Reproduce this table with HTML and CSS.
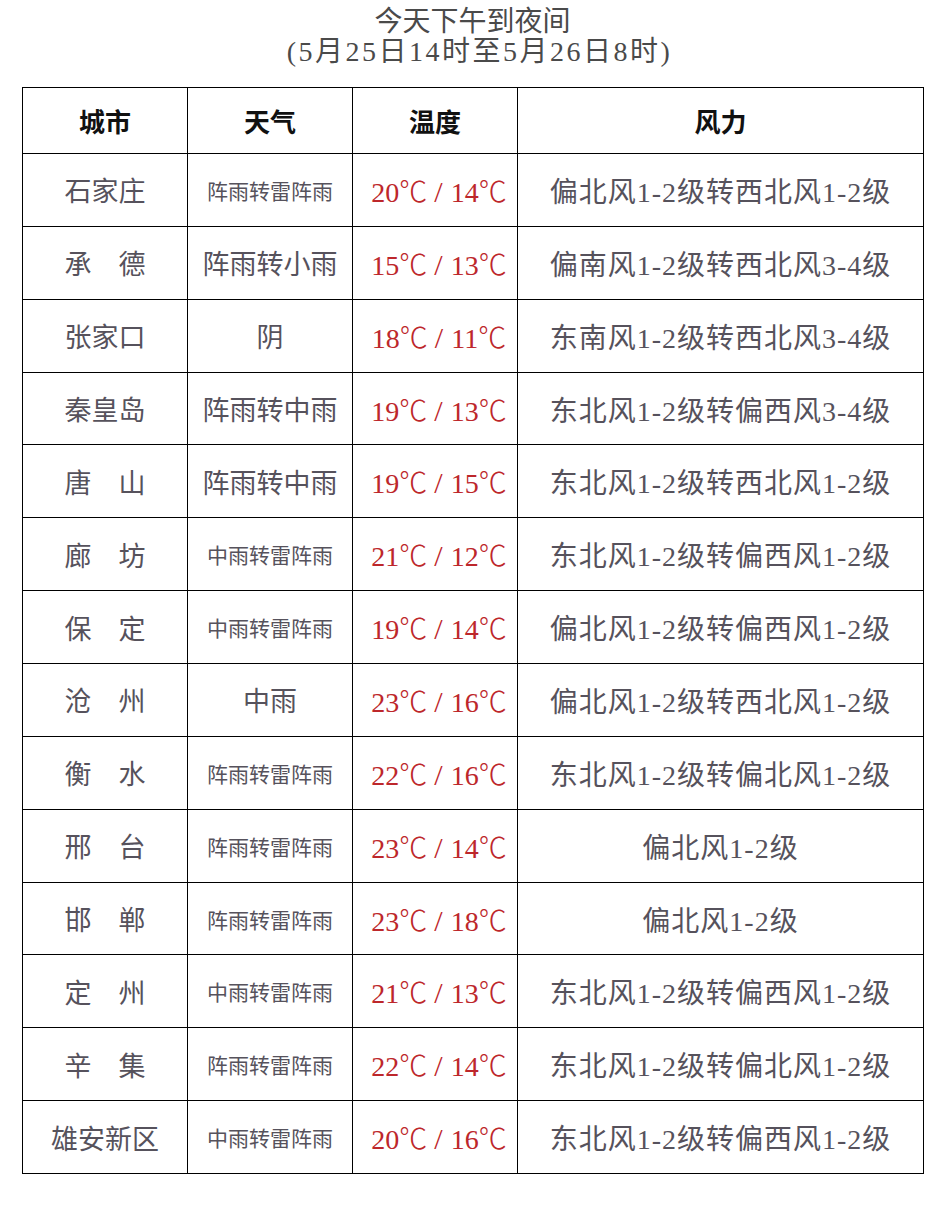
FILE: index.html
```html
<!DOCTYPE html>
<html lang="zh-CN">
<head>
<meta charset="utf-8">
<title>今天下午到夜间</title>
<link rel="stylesheet" href="styles.css">
</head>
<body>
<div class="page">
  <div class="title">
    <div class="title-line">今天下午到夜间</div>
    <div class="title-line sub">(5月25日14时至5月26日8时)</div>
  </div>
  <table class="forecast">
    <colgroup>
      <col class="c-city"><col class="c-wx"><col class="c-temp"><col class="c-wind">
    </colgroup>
    <thead>
      <tr class="head"><th>城市</th><th>天气</th><th>温度</th><th>风力</th></tr>
    </thead>
    <tbody>
      <tr><td class="city">石家庄</td><td class="wx sm">阵雨转雷阵雨</td><td class="temp">20<span class="u">℃</span><span class="sl">/</span>14<span class="u">℃</span></td><td class="wind">偏北风1-2级转西北风1-2级</td></tr>
      <tr><td class="city">承　德</td><td class="wx">阵雨转小雨</td><td class="temp">15<span class="u">℃</span><span class="sl">/</span>13<span class="u">℃</span></td><td class="wind">偏南风1-2级转西北风3-4级</td></tr>
      <tr><td class="city">张家口</td><td class="wx">阴</td><td class="temp">18<span class="u">℃</span><span class="sl">/</span>11<span class="u">℃</span></td><td class="wind">东南风1-2级转西北风3-4级</td></tr>
      <tr><td class="city">秦皇岛</td><td class="wx">阵雨转中雨</td><td class="temp">19<span class="u">℃</span><span class="sl">/</span>13<span class="u">℃</span></td><td class="wind">东北风1-2级转偏西风3-4级</td></tr>
      <tr><td class="city">唐　山</td><td class="wx">阵雨转中雨</td><td class="temp">19<span class="u">℃</span><span class="sl">/</span>15<span class="u">℃</span></td><td class="wind">东北风1-2级转西北风1-2级</td></tr>
      <tr><td class="city">廊　坊</td><td class="wx sm">中雨转雷阵雨</td><td class="temp">21<span class="u">℃</span><span class="sl">/</span>12<span class="u">℃</span></td><td class="wind">东北风1-2级转偏西风1-2级</td></tr>
      <tr><td class="city">保　定</td><td class="wx sm">中雨转雷阵雨</td><td class="temp">19<span class="u">℃</span><span class="sl">/</span>14<span class="u">℃</span></td><td class="wind">偏北风1-2级转偏西风1-2级</td></tr>
      <tr><td class="city">沧　州</td><td class="wx">中雨</td><td class="temp">23<span class="u">℃</span><span class="sl">/</span>16<span class="u">℃</span></td><td class="wind">偏北风1-2级转西北风1-2级</td></tr>
      <tr><td class="city">衡　水</td><td class="wx sm">阵雨转雷阵雨</td><td class="temp">22<span class="u">℃</span><span class="sl">/</span>16<span class="u">℃</span></td><td class="wind">东北风1-2级转偏北风1-2级</td></tr>
      <tr><td class="city">邢　台</td><td class="wx sm">阵雨转雷阵雨</td><td class="temp">23<span class="u">℃</span><span class="sl">/</span>14<span class="u">℃</span></td><td class="wind">偏北风1-2级</td></tr>
      <tr><td class="city">邯　郸</td><td class="wx sm">阵雨转雷阵雨</td><td class="temp">23<span class="u">℃</span><span class="sl">/</span>18<span class="u">℃</span></td><td class="wind">偏北风1-2级</td></tr>
      <tr><td class="city">定　州</td><td class="wx sm">中雨转雷阵雨</td><td class="temp">21<span class="u">℃</span><span class="sl">/</span>13<span class="u">℃</span></td><td class="wind">东北风1-2级转偏西风1-2级</td></tr>
      <tr><td class="city">辛　集</td><td class="wx sm">阵雨转雷阵雨</td><td class="temp">22<span class="u">℃</span><span class="sl">/</span>14<span class="u">℃</span></td><td class="wind">东北风1-2级转偏北风1-2级</td></tr>
      <tr><td class="city">雄安新区</td><td class="wx sm">中雨转雷阵雨</td><td class="temp">20<span class="u">℃</span><span class="sl">/</span>16<span class="u">℃</span></td><td class="wind">东北风1-2级转偏西风1-2级</td></tr>
    </tbody>
  </table>
</div>
</body>
</html>
```

FILE: styles.css
```css
html, body {
  margin: 0;
  padding: 0;
  background: #ffffff;
}

.page {
  padding: 7px 0 0 22px;
  font-family: "Liberation Serif", "Noto Sans CJK SC", serif;
}

.title {
  width: 901px;
  text-align: center;
  color: #4a4a4a;
  font-size: 28px;
  line-height: 30px;
  margin-bottom: 20px;
}

.title-line.sub {
  letter-spacing: 2.5px;
  padding-left: 14px;
}

.forecast {
  width: 901px;
  table-layout: fixed;
  border-collapse: collapse;
  border: 1px solid #000;
}

.c-city, .c-wx, .c-temp { width: 165px; }
.c-wind { width: 406px; }

.forecast th,
.forecast td {
  border: 1px solid #000;
  text-align: center;
  vertical-align: middle;
  padding: 0;
  white-space: nowrap;
}

.head th {
  height: 65px;
  font-size: 26px;
  font-weight: 700;
  color: #111;
}

.forecast td {
  height: 71.86px;
  font-size: 27px;
  color: #56525c;
}

.forecast td.sm {
  font-size: 21px;
}

.forecast td.temp {
  color: #bd272b;
  font-size: 28px;
  padding-left: 8px;
}

.forecast td.temp .u {
  font-family: "Noto Sans CJK SC", sans-serif;
  font-weight: 300;
}

.forecast td.temp .sl {
  display: inline-block;
  font-size: 30px;
  margin: 0 8px 0 7px;
}

.forecast td.wind {
  font-size: 28px;
  letter-spacing: 1px;
}
```
